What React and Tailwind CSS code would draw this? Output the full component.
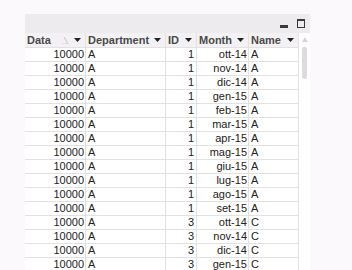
import React from "react";

const months = ["ott-14","nov-14","dic-14","gen-15","feb-15","mar-15","apr-15","mag-15","giu-15","lug-15","ago-15","set-15","ott-14","nov-14","dic-14","gen-15"];
const rows = months.map((m, i) => ({ data: "10000", dep: "A", id: i < 12 ? "1" : "3", month: m, name: i < 12 ? "A" : "C" }));

function Arrow() {
  return (
    <svg width="7" height="4" viewBox="0 0 7 4" className="shrink-0">
      <polygon points="0,0 7,0 3.5,4" fill="#222" />
    </svg>
  );
}

function Head({ label, w, sort }) {
  return (
    <div className={`${w} h-[14px] flex items-center justify-between pl-[2px] pr-[4px] border-r border-[#e2e2e2]`}>
      <span className="font-bold text-[11px] leading-none text-[#4a4a4a]">{label}</span>
      <span className="flex items-center gap-[5px]">
        {sort && (
          <svg width="7" height="7" viewBox="0 0 7 7">
            <line x1="0" y1="6.5" x2="5" y2="6.5" stroke="#e2e2e2" strokeWidth="1" />
            <line x1="2" y1="0" x2="6" y2="7" stroke="#c4c4c4" strokeWidth="1" />
          </svg>
        )}
        <Arrow />
      </span>
    </div>
  );
}

export default function App() {
  const cell = "h-[14px] border-r border-b border-[#e2e2e2] flex items-center text-[11px] leading-none text-[#222]";
  return (
    <div className="w-[352px] h-[270px] bg-[#fcf9fc] overflow-hidden" style={{ fontFamily: '"Liberation Sans", Arial, sans-serif' }}>
      <div className="ml-[25px] mt-[14px] w-[285px] bg-white">
        <div className="h-[19px] bg-[#eeebee] flex items-center justify-end gap-[9px] pr-[5px]">
          <div className="w-[8px] h-[3px] bg-[#3a3a3a] mt-[5px]" />
          <div className="w-[8px] h-[9px] border border-[#3a3a3a] border-t-[2px] mt-[-1px]" />
        </div>
        <div className="flex">
          <div className="w-[274px]">
            <div className="flex bg-[#f3f1f3] border-b border-[#e2e2e2] h-[15px] items-center">
              <Head label="Data" w="w-[61px]" sort />
              <Head label="Department" w="w-[80px]" />
              <Head label="ID" w="w-[31px]" />
              <Head label="Month" w="w-[52px]" />
              <Head label="Name" w="w-[50px]" />
            </div>
            {rows.map((r, i) => (
              <div key={i} className="flex">
                <div className={`${cell} w-[61px] justify-end pr-[1px]`}>{r.data}</div>
                <div className={`${cell} w-[80px] pl-[2px]`}>{r.dep}</div>
                <div className={`${cell} w-[31px] justify-end pr-[2px]`}>{r.id}</div>
                <div className={`${cell} w-[52px] justify-end pr-[1px]`}>{r.month}</div>
                <div className={`${cell} w-[50px] pl-[2px]`}>{r.name}</div>
              </div>
            ))}
          </div>
          <div className="w-[11px] flex flex-col items-center pt-[4px]">
            <svg width="6" height="5" viewBox="0 0 6 5">
              <polygon points="3,0 6,5 0,5" fill="#d6d6d6" />
            </svg>
            <div className="mt-[5px] w-[5px] h-[32px] rounded-[2px] bg-[#dcdcdc]" />
          </div>
        </div>
      </div>
    </div>
  );
}
